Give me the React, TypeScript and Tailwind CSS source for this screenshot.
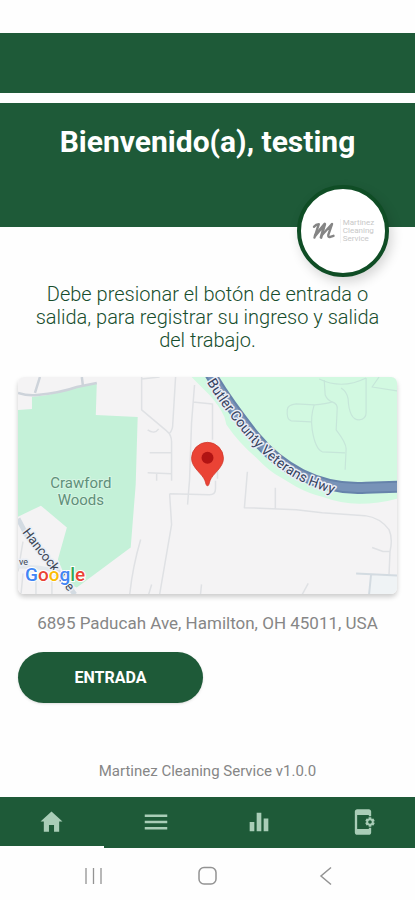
import React from 'react';
import { IoMdHome } from 'react-icons/io';
import { MdAppSettingsAlt, MdEqualizer, MdMenu } from 'react-icons/md';

const tabs = [
  { label: 'Inicio', icon: <IoMdHome size={27} />, active: true },
  { label: 'Registros', icon: <MdMenu size={30} />, active: false },
  { label: 'Reportes', icon: <MdEqualizer size={28} />, active: false },
  { label: 'Ajustes', icon: <MdAppSettingsAlt size={28} />, active: false },
];

function CompanyLogo() {
  return (
    <div className="absolute right-[26px] -bottom-[50px] flex size-23 items-center justify-center gap-1 rounded-full border-4 border-[#0f4d25] bg-white shadow-[3px_5px_12px_rgba(0,0,0,0.16)]">
      <svg viewBox="0 0 24 18" className="h-[18px] w-6 shrink-0" fill="none" stroke="#858585" strokeLinecap="round" strokeLinejoin="round">
        <path d="M2 4.800Q4 2.200 6.800 2.200L2.500 15.500" strokeWidth="2.400" />
        <path d="M3.200 13.500L12.800 2L9 15.500" strokeWidth="2.800" />
        <path d="M10 13L20 2L16.300 12.800Q16 15.600 18.300 14.900L21.500 13.800" strokeWidth="2.400" />
      </svg>
      <span className="flex flex-col border-l border-gray-100 pl-0.5 text-[8px] leading-[8px] text-[#c8c8c8]">
        <span>Martinez</span>
        <span>Cleaning</span>
        <span>Service</span>
      </span>
    </div>
  );
}

function LocationMap() {
  return (
    <svg
      viewBox="0 0 380 218"
      role="img"
      aria-label="Mapa"
      className="block h-auto w-full rounded-md shadow-[0_3px_5px_rgba(0,0,0,0.2)]"
      fontFamily="Roboto, sans-serif"
    >
      <rect width="380" height="218" fill="#f4f3f4" />

      {/* parks */}
      <path
        d="M0 33L14 32V20L30 18L59 10L79 6L78 38L120 40L118 108L113 171L59 211L50 207L40 183L49 151L23 129L0 140Z"
        fill="#c4f1d8"
      />
      <path
        d="M174 0L192 18Q202 29 207 40L209 48Q222 67 239 81Q252 95 264 101L279 110Q292 117 305 120Q324 127 342 127Q362 127 380 122V0Z"
        fill="#d2f9e1"
      />
      <path d="M354 199H380V218H352Z" fill="#eff3f5" />

      {/* streets */}
      <g fill="none" stroke="#dfe1e4" strokeWidth="1.500" strokeLinejoin="round">
        <path d="M124 0V33L149 54Q154 58 154 65V104M158 0L155 50Q154 55 151 57M124 2L142 0" />
        <path d="M130 53Q137 58 141 52M132 76H154M130 96L154 97M139 97V104" />
        <path d="M177 8L174 46L172 103L170 128M175 25L195 27V63M200 73V102" />
        <path d="M152 117L192 118Q198 118 198 112V104M152 117L154 148L142 218M123 163Q115 190 112 218M134 208L131 218M184 208L183 218" />
        <path d="M230 95L227 131L279 133L305 136L348 139Q363 141 372 153Q376 162 373 175L372 198M258 111V133M355 171L366 175H373" />
        <path d="M291 207L285 218M5 165L0 195M18 193V218M34 187V218M5 197L3 218" />
      </g>
      <path d="M339 197L380 199M354 198L352 218" stroke="#d3dbe1" strokeWidth="2" fill="none" />
      <g fill="none" stroke="#cdd3da" strokeWidth="2.500">
        <path d="M0 16Q10 19 19 18Q42 16 59 10L79 6M22 0L17 16M64 0L65 8" />
      </g>
      <path d="M0 142L10 161L38 192L57 218" fill="none" stroke="#d3dbe2" strokeWidth="5" />
      <path d="M0 190L20 191L38 194" fill="none" stroke="#e3e8ec" strokeWidth="4" />
      <g fill="none" stroke="#c6e6d9" strokeWidth="1.200" strokeLinejoin="round">
        <path d="M297 28L279 27Q270 28 270 33Q269 43 274 44L294 45M297 28Q309 27 315 25Q321 27 320 33L319 53Q329 66 329 72L328 93" />
        <path d="M297 28Q293 40 295 53Q298 72 305 75L328 76M307 3L308 18Q310 23 315 25M302 2Q325 13 349 1" />
        <path d="M324 11Q330 15 331 22Q332 43 342 43Q349 42 349 36V1M362 0L355 10L380 14" />
      </g>

      {/* highway */}
      <path d="M193 -3C205 18 219 37 238 61C262 90 300 114 349 111L382 110" fill="none" stroke="#6683ab" strokeWidth="12" />
      <path d="M193 -3C205 18 219 37 238 61C262 90 300 114 349 111L382 110" fill="none" stroke="#7893b8" strokeWidth="8" />

      <path id="butler" d="M187 2C200 22 207 33 218 46C238 72 262 96 293 109L336 125" fill="none" />
      <g stroke="#e9eef6" strokeWidth="3" strokeLinejoin="round" className="[paint-order:stroke]">
        <text fontSize="14" fill="#35415d">
          <textPath href="#butler" startOffset="4">
            Butler County Veterans Hwy
          </textPath>
        </text>
        <text x="4" y="156" fontSize="13" fill="#3c4654" transform="rotate(52 4 156)">
          Hancock Ave
        </text>
        <text x="1" y="189" fontSize="9" fill="#3c4654">
          ve
        </text>
      </g>
      <g fill="#5f8f79" stroke="#d5f5e3" strokeWidth="2" textAnchor="middle" fontSize="15" className="[paint-order:stroke]">
        <text x="63" y="111">Crawford</text>
        <text x="63" y="128">Woods</text>
      </g>

      <text x="7" y="205" fontSize="19" fontWeight="500" stroke="#ffffff" strokeWidth="2" className="[paint-order:stroke]">
        <tspan fill="#4285f4">G</tspan>
        <tspan fill="#ea4335">o</tspan>
        <tspan fill="#fbbc05">o</tspan>
        <tspan fill="#4285f4">g</tspan>
        <tspan fill="#34a853">l</tspan>
        <tspan fill="#ea4335">e</tspan>
      </text>

      {/* pin */}
      <path
        d="M190 109C188.500 109 188.500 107 187.500 104C185 97 174 91 174 81.500A16 16 0 0 1 206 81.500C206 91 195 97 192.500 104C191.500 107 191.500 109 190 109Z"
        fill="#ea4335"
        stroke="#d0372b"
        strokeWidth="0.800"
      />
      <circle cx="190" cy="81" r="6" fill="#b11313" />
    </svg>
  );
}

function SystemBar() {
  return (
    <div className="grid h-[52px] grid-cols-3 place-items-center px-9 pt-1 text-[#939393]">
      <button type="button" aria-label="Recientes">
        <svg viewBox="0 0 20 20" className="size-5" fill="none" stroke="currentColor" strokeWidth="1.300">
          <path d="M3 2V18M10.500 2V18M18 2V18" />
        </svg>
      </button>
      <button type="button" aria-label="Inicio del sistema">
        <svg viewBox="0 0 20 20" className="size-5" fill="none" stroke="currentColor" strokeWidth="1.500">
          <rect x="2" y="1.500" width="17" height="16.500" rx="5" />
        </svg>
      </button>
      <button type="button" aria-label="Atrás">
        <svg viewBox="0 0 20 20" className="size-5" fill="none" stroke="currentColor" strokeWidth="1.500">
          <path d="M19 1.500L9 10L19 18.500" />
        </svg>
      </button>
    </div>
  );
}

export default function App() {
  return (
    <div className="flex min-h-screen flex-col bg-[#fefefe] font-[Roboto,sans-serif]">
      <div className="mt-[33px] h-[60px] bg-[#1e5a38]" />

      <header className="relative mt-2.5 h-[124px] bg-[#1e5a38] px-4 pt-5">
        <h1 className="text-center text-[30px] leading-[38px] font-bold text-white">Bienvenido(a), testing</h1>
        <CompanyLogo />
      </header>

      <main className="flex flex-1 flex-col px-[18px] pt-14">
        <p className="px-3 text-center text-[20px] leading-[23px] font-light text-[#164d2d]">
          Debe presionar el botón de entrada o salida, para registrar su ingreso y salida del trabajo.
        </p>

        <div className="mt-[25px]">
          <LocationMap />
        </div>

        <p className="mt-[17px] text-center text-[17px] leading-6 text-[#868686]">6895 Paducah Ave, Hamilton, OH 45011, USA</p>

        <button
          type="button"
          className="mt-[17px] h-[51px] w-[185px] rounded-full bg-[#1e5a38] text-base font-bold text-white shadow-sm"
        >
          ENTRADA
        </button>

        <p className="mt-auto pb-4 text-center text-[15px] leading-5 text-[#868686]">Martinez Cleaning Service v1.0.0</p>
      </main>

      <nav className="grid h-[51px] grid-cols-4 bg-[#1e5a38] text-[#a9cdb7]">
        {tabs.map((tab) => (
          <button
            key={tab.label}
            type="button"
            aria-label={tab.label}
            className={`flex items-center justify-center border-b-2 ${tab.active ? 'border-white' : 'border-transparent'}`}
          >
            {tab.icon}
          </button>
        ))}
      </nav>

      <SystemBar />
    </div>
  );
}
